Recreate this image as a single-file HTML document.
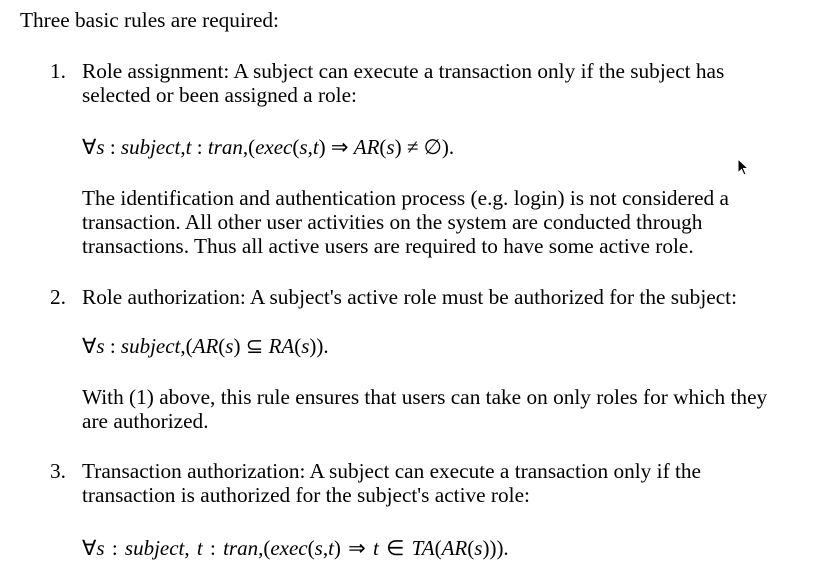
<!DOCTYPE html>
<html><head><meta charset="utf-8"><style>
body{margin:0;width:816px;height:574px;background:#fff;overflow:hidden;position:relative;font-family:"Liberation Serif",serif;font-size:21.3px;color:#000}
.l{position:absolute;white-space:nowrap;line-height:24px}
.f{font-size:21px}
i{font-style:italic}
</style></head><body>
<div class="l" style="left:20px;top:8px">Three basic rules are required:</div>

<div class="l" style="left:50px;top:59px">1.</div>
<div class="l" style="left:82px;top:59px">Role assignment: A subject can execute a transaction only if the subject has</div>
<div class="l" style="left:82px;top:83px">selected or been assigned a role:</div>
<div class="l f" style="left:82px;top:135px">∀<i>s</i> : <i>subject</i>,<i>t</i> : <i>tran</i>,(<i>exec</i>(<i>s</i>,<i>t</i>) ⇒ <i>AR</i>(<i>s</i>) ≠ ∅).</div>
<div class="l" style="left:82px;top:186px">The identification and authentication process (e.g. login) is not considered a</div>
<div class="l" style="left:82px;top:210px">transaction. All other user activities on the system are conducted through</div>
<div class="l" style="left:82px;top:234px">transactions. Thus all active users are required to have some active role.</div>

<div class="l" style="left:50px;top:285px">2.</div>
<div class="l" style="left:82px;top:285px">Role authorization: A subject's active role must be authorized for the subject:</div>
<div class="l f" style="left:82px;top:334px">∀<i>s</i> : <i>subject</i>,(<i>AR</i>(<i>s</i>) ⊆ <i>RA</i>(<i>s</i>)).</div>
<div class="l" style="left:82px;top:385px">With (1) above, this rule ensures that users can take on only roles for which they</div>
<div class="l" style="left:82px;top:409px">are authorized.</div>

<div class="l" style="left:50px;top:459px">3.</div>
<div class="l" style="left:82px;top:459px">Transaction authorization: A subject can execute a transaction only if the</div>
<div class="l" style="left:82px;top:483px">transaction is authorized for the subject's active role:</div>
<div class="l f" style="left:82px;top:536px;word-spacing:2px">∀<i>s</i> : <i>subject</i>, <i>t</i> : <i>tran</i>,(<i>exec</i>(<i>s</i>,<i>t</i>) ⇒ <i>t</i> ∈ <i>TA</i>(<i>AR</i>(<i>s</i>))).</div>

<svg style="position:absolute;left:737px;top:158px" width="14" height="20" viewBox="0 0 14 20"><path d="M1 1 L1 15 L4.5 11.5 L7 17 L9 16 L6.5 10.5 L11 10.5 Z" fill="#000" stroke="#fff" stroke-width="1"/></svg>
</body></html>
